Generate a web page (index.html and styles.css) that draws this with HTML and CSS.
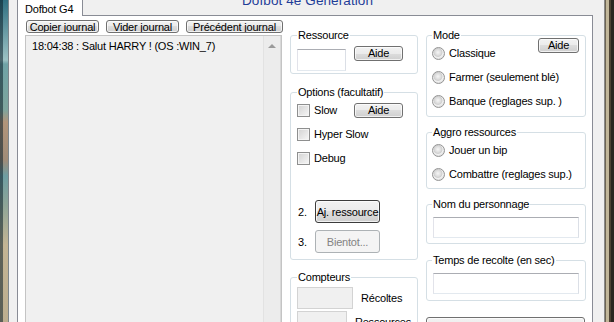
FILE: index.html
```html
<!DOCTYPE html>
<html lang="fr">
<head>
    <meta charset="UTF-8">
    <title>Dofbot 4e Génération</title>
    <link rel="stylesheet" href="styles.css">
</head>
<body>
    <div class="screen">
        <div class="desk desk-left"></div>

        <div class="window">
            <div class="tabbar">
                <div class="tab">Dofbot G4</div>
                <div class="tab-rest">
                    <div class="title">Dofbot 4e Génération</div>
                </div>
            </div>

            <div class="tabpage">
                <!-- journal -->
                <div class="col-journal">
                    <div class="journal-buttons">
                        <button class="btn btn-clip btn-small">Copier journal</button>
                        <button class="btn btn-clip btn-small">Vider journal</button>
                        <button class="btn btn-clip btn-wide">Précédent journal</button>
                    </div>
                    <div class="listbox">
                        <div class="list-items">
                            <div>18:04:38 : Salut HARRY ! (OS :WIN_7)</div>
                        </div>
                        <div class="scrollbar"><span class="arrow-up"></span></div>
                    </div>
                </div>

                <!-- colonne du milieu -->
                <div class="col-mid">
                    <fieldset class="group group-ressource">
                        <legend>Ressource</legend>
                        <div class="ressource-row">
                            <input type="text" class="textbox textbox-small">
                            <button class="btn btn-aide">Aide</button>
                        </div>
                    </fieldset>

                    <fieldset class="group group-options">
                        <legend>Options (facultatif)</legend>
                        <div class="check-row">
                            <label class="check-label"><span class="check"></span>Slow</label>
                            <button class="btn btn-aide">Aide</button>
                        </div>
                        <div class="check-row">
                            <label class="check-label"><span class="check"></span>Hyper Slow</label>
                        </div>
                        <div class="check-row">
                            <label class="check-label"><span class="check"></span>Debug</label>
                        </div>
                        <div class="step-row step-first">
                            <span class="step-num">2.</span>
                            <button class="btn btn-step btn-default">Aj. ressource</button>
                        </div>
                        <div class="step-row">
                            <span class="step-num">3.</span>
                            <button class="btn btn-step" disabled>Bientot...</button>
                        </div>
                    </fieldset>

                    <fieldset class="group group-compteurs">
                        <legend>Compteurs</legend>
                        <div class="counter-row">
                            <div class="counter-box"></div>
                            <span>Récoltes</span>
                        </div>
                        <div class="counter-row">
                            <div class="counter-box"></div>
                            <span>Ressources</span>
                        </div>
                    </fieldset>
                </div>

                <!-- colonne de droite -->
                <div class="col-right">
                    <fieldset class="group group-mode">
                        <legend>Mode</legend>
                        <div class="radio-row">
                            <label class="radio-label"><span class="radio"></span>Classique</label>
                            <button class="btn btn-aide btn-mode">Aide</button>
                        </div>
                        <div class="radio-row">
                            <label class="radio-label"><span class="radio"></span>Farmer (seulement blé)</label>
                        </div>
                        <div class="radio-row">
                            <label class="radio-label"><span class="radio"></span>Banque (reglages sup. )</label>
                        </div>
                    </fieldset>

                    <fieldset class="group group-aggro">
                        <legend>Aggro ressources</legend>
                        <div class="radio-row">
                            <label class="radio-label"><span class="radio"></span>Jouer un bip</label>
                        </div>
                        <div class="radio-row">
                            <label class="radio-label"><span class="radio"></span>Combattre (reglages sup.)</label>
                        </div>
                    </fieldset>

                    <fieldset class="group group-nom">
                        <legend>Nom du personnage</legend>
                        <input type="text" class="textbox textbox-wide">
                    </fieldset>

                    <fieldset class="group group-temps">
                        <legend>Temps de recolte (en sec)</legend>
                        <input type="text" class="textbox textbox-wide">
                    </fieldset>

                    <button class="btn btn-big"></button>
                </div>
            </div>
        </div>

        <div class="desk desk-right"></div>
    </div>
</body>
</html>
```

FILE: styles.css
```css
body {
    margin: 0;
    font-family: "Liberation Sans", Arial, sans-serif;
    font-size: 11px;
    letter-spacing: -0.2px;
    color: #000;
    background-color: #f0f0f0;
    overflow: hidden;
}

.screen {
    display: flex;
    width: 614px;
    height: 322px;
    overflow: hidden;
}

.desk {
    flex: none;
    height: 100%;
}

.desk-left {
    width: 8px;
    background:
        linear-gradient(to right, rgba(10, 30, 40, 0.55) 0 3px, transparent 3px),
        linear-gradient(to bottom, #2f6f80 0, #9cc2c4 60px, #6fa3a6 64px, #7ea59d 110px, #b2957a 122px, #a08c78 160px, #6e9ea2 176px, #8ea597 205px, #c4b594 245px, #bcae8f 322px);
}

.desk-right {
    width: 9px;
    background:
        linear-gradient(to right, #6d6452 0 1px, #c1b699 1px 4px, #4d4233 4px 6px, #2b2620 6px);
}

.window {
    flex: 1;
    display: flex;
    flex-direction: column;
    padding: 0 11px 0 8px;
    border-left: 1px solid #7d858a;
    border-right: 1px solid #8a8a8a;
    background-color: #f0f0f0;
}

/* onglets */
.tabbar {
    display: flex;
    height: 18px;
}

.tab {
    box-sizing: border-box;
    width: 66px;
    padding: 3px 0 0 7px;
    line-height: 13px;
    background-color: #fff;
    border-left: 1px solid #898c95;
    border-right: 1px solid #898c95;
}

.tab-rest {
    flex: 1;
    border-bottom: 1px solid #898c95;
}

.title {
    margin: -7px 0 0 159px;
    font-size: 13.5px;
    letter-spacing: 0.1px;
    line-height: 16px;
    color: #1f3d98;
}

.tabpage {
    flex: 1;
    display: flex;
    padding: 0 0 0 7px;
    background-color: #fff;
    border-left: 1px solid #898c95;
    border-right: 1px solid #898c95;
}

/* boutons */
.btn {
    box-sizing: border-box;
    margin: 0;
    padding: 0;
    font-family: inherit;
    font-size: 11px;
    letter-spacing: -0.2px;
    color: #000;
    border: 1px solid #707070;
    border-radius: 3px;
    background: linear-gradient(to bottom, #f2f2f2 0%, #ebebeb 50%, #dddddd 50%, #cfcfcf 100%);
    box-shadow: inset 0 0 0 1px rgba(255, 255, 255, 0.7);
}

.btn:disabled {
    color: #838383;
    border-color: #adb2b5;
    background: #f4f4f4;
    box-shadow: none;
}

.btn-default {
    border-color: #3c3c3c;
}

.btn-clip {
    height: 13px;
    line-height: 13px;
    overflow: hidden;
    vertical-align: top;
}

.btn-small {
    width: 73px;
}

.btn-wide {
    width: 97px;
}

.btn-aide {
    width: 49px;
    height: 15px;
    line-height: 13px;
}

.btn-step {
    width: 65px;
    height: 23px;
}

.btn-big {
    width: 159px;
    height: 30px;
    margin-top: 16px;
}

/* journal */
.col-journal {
    width: 258px;
    display: flex;
    flex-direction: column;
}

.journal-buttons {
    display: flex;
    gap: 7px;
    margin: 4px 0 2px 1px;
}

.listbox {
    flex: 1;
    display: flex;
    width: 257px;
    box-sizing: border-box;
    border: 1px solid #c4c4c4;
    border-bottom: none;
    background-color: #f0f0f0;
}

.list-items {
    flex: 1;
    padding: 4px 0 0 6px;
    line-height: 13px;
}

.scrollbar {
    width: 16px;
    border-left: 1px solid #e2e2e2;
    border-right: 1px solid #d8d8d8;
    background-color: #ececec;
    display: flex;
    justify-content: center;
}

.arrow-up {
    width: 0;
    height: 0;
    margin-top: 8px;
    border-left: 4px solid transparent;
    border-right: 4px solid transparent;
    border-bottom: 4px solid #9a9a9a;
}

/* cadres */
.col-mid {
    width: 128px;
    margin-left: 7px;
}

.col-right {
    width: 160px;
    margin-left: 8px;
}

.group {
    margin: 0;
    padding: 0 6px 0 6px;
    border: 1px solid #d5dfe5;
    border-radius: 3px;
    min-width: 0;
}

.group legend {
    padding: 0 1px;
    line-height: 13px;
}

.col-right .group {
    padding-left: 5px;
}

.group-ressource { margin-top: 13px; padding-bottom: 2px; }
.group-options { margin-top: 12px; padding-top: 4px; padding-bottom: 6px; }
.group-compteurs { margin-top: 11px; padding-top: 3px; }
.group-mode { margin-top: 13px; padding-top: 4px; padding-bottom: 7px; }
.group-aggro { margin-top: 9px; padding-top: 4px; padding-bottom: 6px; }
.group-nom { margin-top: 9px; padding-top: 6px; padding-bottom: 5px; }
.group-temps { margin-top: 10px; padding-top: 6px; padding-bottom: 6px; }

.ressource-row {
    display: flex;
    align-items: flex-start;
}

.ressource-row .btn-aide {
    margin: 4px 0 0 8px;
}

.textbox {
    box-sizing: border-box;
    margin: 0;
    padding: 0;
    display: block;
    border: 1px solid #abadb3;
    border-color: #abadb3 #dbdfe6 #e3e9ef #e2e3ea;
    background-color: #fff;
}

.textbox-small {
    width: 49px;
    height: 22px;
    margin-top: 7px;
}

.textbox-wide {
    width: 146px;
    height: 21px;
    margin-left: 1px;
}

/* cases à cocher et boutons radio */
.check-row,
.radio-row {
    display: flex;
    align-items: center;
    height: 15px;
}

.check-row + .check-row,
.radio-row + .radio-row {
    margin-top: 9px;
}

.check-label,
.radio-label {
    display: flex;
    align-items: center;
    line-height: 13px;
    white-space: nowrap;
}

.check-label {
    min-width: 57px;
}

.check,
.radio {
    flex: none;
    width: 13px;
    height: 13px;
    box-sizing: border-box;
    margin-right: 4px;
}

.check {
    border: 1px solid #8e8f8f;
    box-shadow: inset 0 0 0 1px #f4f4f4;
    background: linear-gradient(135deg, #d2d2d2, #f7f7f7);
}

.radio {
    border: 1px solid #939393;
    border-radius: 50%;
    background: radial-gradient(circle at 45% 40%, #f6f6f6 0, #dcdcdc 3px, #cfcfcf 4px, #f2f2f2 5px, #e4e4e4 6px);
}

.btn-mode {
    width: 41px;
    margin: -17px 0 0 auto;
}

/* étapes */
.step-row {
    display: flex;
    align-items: center;
}

.step-first {
    margin-top: 34px;
}

.step-row + .step-row {
    margin-top: 7px;
}

.step-num {
    width: 17px;
    margin-left: 1px;
}

/* compteurs */
.counter-row {
    display: flex;
    align-items: center;
    margin-bottom: 2px;
}

.counter-box {
    width: 56px;
    height: 22px;
    box-sizing: border-box;
    margin-right: 8px;
    border: 1px solid #d3d3d3;
    background-color: #f0f0f0;
}
```
